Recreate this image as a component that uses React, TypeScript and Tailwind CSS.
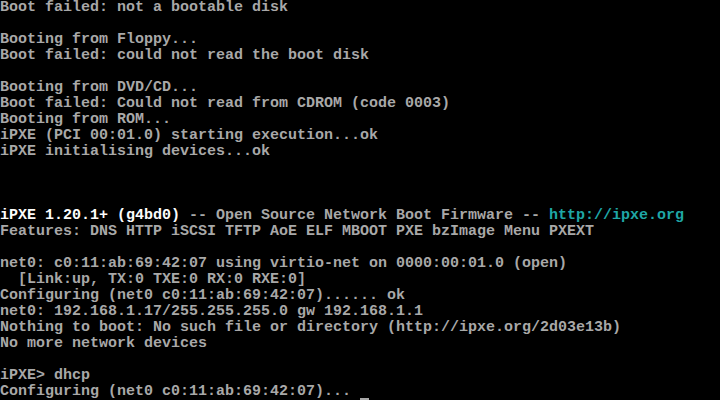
import React from "react";

const G = "text-[#a8a8a8]";
const W = "text-[#fcfcfc]";
const C = "text-[#1fa6a6]";

type Seg = [string, string];
const lines: Seg[][] = [
  [["Boot failed: not a bootable disk", G]],
  [],
  [["Booting from Floppy...", G]],
  [["Boot failed: could not read the boot disk", G]],
  [],
  [["Booting from DVD/CD...", G]],
  [["Boot failed: Could not read from CDROM (code 0003)", G]],
  [["Booting from ROM...", G]],
  [["iPXE (PCI 00:01.0) starting execution...ok", G]],
  [["iPXE initialising devices...ok", G]],
  [],
  [],
  [],
  [
    ["iPXE 1.20.1+ (g4bd0)", W],
    [" -- Open Source Network Boot Firmware -- ", G],
    ["http://ipxe.org", C],
  ],
  [["Features: DNS HTTP iSCSI TFTP AoE ELF MBOOT PXE bzImage Menu PXEXT", G]],
  [],
  [["net0: c0:11:ab:69:42:07 using virtio-net on 0000:00:01.0 (open)", G]],
  [["  [Link:up, TX:0 TXE:0 RX:0 RXE:0]", G]],
  [["Configuring (net0 c0:11:ab:69:42:07)...... ok", G]],
  [["net0: 192.168.1.17/255.255.255.0 gw 192.168.1.1", G]],
  [["Nothing to boot: No such file or directory (http://ipxe.org/2d03e13b)", G]],
  [["No more network devices", G]],
  [],
  [["iPXE> dhcp", G]],
  [["Configuring (net0 c0:11:ab:69:42:07)...", G]],
];

export default function App() {
  return (
    <div
      className="w-[720px] h-[400px] bg-black overflow-hidden"
      style={{ fontFamily: '"Liberation Mono", "DejaVu Sans Mono", monospace' }}
    >
      {lines.map((segs, i) => (
        <div key={i} className="h-[16px] leading-[16px] text-[15px] font-bold whitespace-pre flex">
          {segs.map(([t, c], j) => (
            <span key={j} className={c}>
              {t}
            </span>
          ))}
          {i === 24 && (
            <span className="relative w-[9px] h-[16px]">
              <span className="absolute left-[9px] bottom-0 w-[9px] h-[2px] bg-[#a8a8a8]" />
            </span>
          )}
        </div>
      ))}
    </div>
  );
}
